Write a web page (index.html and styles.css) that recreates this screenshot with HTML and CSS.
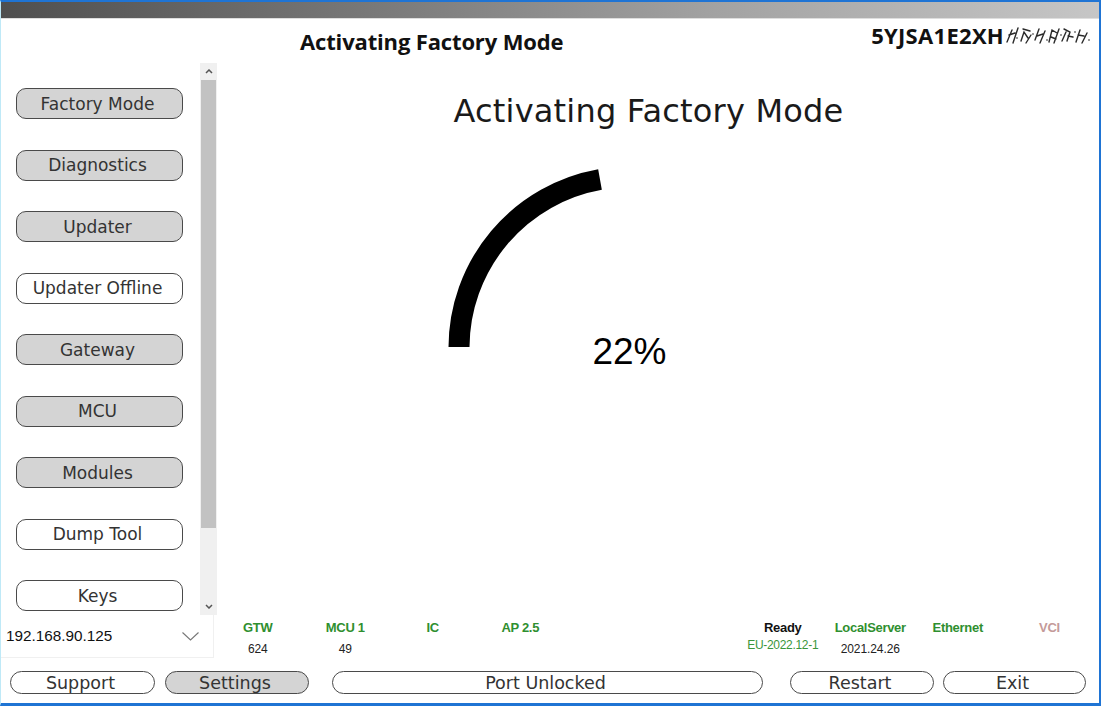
FILE: index.html
```html
<!DOCTYPE html>
<html lang="en">
<head>
<meta charset="utf-8">
<title>Activating Factory Mode</title>
<link rel="stylesheet" href="styles.css">
</head>
<body>
<div class="window">
  <div class="titlebar"></div>
  <header class="header">
    <div class="title">Activating Factory Mode</div>
    <div class="vin">5YJSA1E2XH<svg class="scribble" width="86" height="22" viewBox="0 0 86 22" aria-hidden="true">
      <g fill="none" stroke="#2a2a2a" stroke-width="1.4" stroke-linecap="round">
        <path d="M3 18 L8 6 M5 11 L11 9 M9 19 L14 4"/>
        <path d="M17 17 L20 8 L24 14 M19 5 L26 7 M22 19 L27 11"/>
        <path d="M31 16 L35 5 M33 12 L39 10 M36 19 L41 7"/>
        <path d="M45 18 L48 6 L53 9 M47 13 L52 15 M50 19 L55 5"/>
        <path d="M58 17 L62 8 M60 5 L66 8 L63 17 M64 12 L69 13"/>
        <path d="M72 18 L76 6 M74 11 L80 12 M78 19 L83 9"/>
      </g>
      <g fill="#9a9a9a">
        <rect x="12" y="13" width="2" height="2"/><rect x="28" y="9" width="2" height="2"/>
        <rect x="42" y="15" width="2" height="2"/><rect x="56" y="10" width="2" height="2"/>
        <rect x="70" y="7" width="2" height="2"/><rect x="84" y="15" width="2" height="2"/>
      </g>
    </svg></div>
  </header>

  <div class="middle">
    <nav class="sidebar">
      <div class="btnlist">
        <button class="side-btn filled">Factory Mode</button>
        <button class="side-btn filled">Diagnostics</button>
        <button class="side-btn filled">Updater</button>
        <button class="side-btn">Updater Offline</button>
        <button class="side-btn filled">Gateway</button>
        <button class="side-btn filled">MCU</button>
        <button class="side-btn filled">Modules</button>
        <button class="side-btn">Dump Tool</button>
        <button class="side-btn">Keys</button>
      </div>
      <div class="scrollbar">
        <div class="arrow"><svg width="8" height="5" viewBox="0 0 8 5"><path d="M1 4 L4 1 L7 4" fill="none" stroke="#555" stroke-width="1.5"/></svg></div>
        <div class="thumb"></div>
        <div class="track"></div>
        <div class="arrow"><svg width="8" height="5" viewBox="0 0 8 5"><path d="M1 1 L4 4 L7 1" fill="none" stroke="#555" stroke-width="1.5"/></svg></div>
      </div>
    </nav>

    <main class="content">
      <h1 class="heading">Activating Factory Mode</h1>
      <div class="progress">
        <svg width="380" height="220" viewBox="0 0 380 220">
          <path d="M19 190 A171 171 0 0 1 160 22.5" fill="none" stroke="#000" stroke-width="21"/>
          <text x="189.5" y="207" text-anchor="middle" class="pct">22%</text>
        </svg>
      </div>
    </main>
  </div>

  <div class="lower">
    <div class="dropdown">
      <span class="ip">192.168.90.125</span>
      <svg width="17" height="9" viewBox="0 0 17 9"><path d="M0.5 0.5 L8.5 8 L16.5 0.5" fill="none" stroke="#777" stroke-width="1.1"/></svg>
    </div>
    <div class="status">
      <div class="stat"><div class="lbl green">GTW</div><div class="val">624</div></div>
      <div class="stat"><div class="lbl green">MCU 1</div><div class="val">49</div></div>
      <div class="stat"><div class="lbl green">IC</div></div>
      <div class="stat"><div class="lbl green">AP 2.5</div></div>
      <div class="stat"></div>
      <div class="stat"></div>
      <div class="stat"><div class="lbl">Ready</div><div class="val green up">EU-2022.12-1</div></div>
      <div class="stat"><div class="lbl green">LocalServer</div><div class="val">2021.24.26</div></div>
      <div class="stat"><div class="lbl green">Ethernet</div></div>
      <div class="stat"><div class="lbl pink">VCI</div></div>
    </div>
  </div>

  <div class="actions">
    <button class="pill w-support">Support</button>
    <button class="pill filled w-settings">Settings</button>
    <button class="pill w-port">Port Unlocked</button>
    <button class="pill w-restart">Restart</button>
    <button class="pill w-exit">Exit</button>
  </div>
</div>
</body>
</html>
```

FILE: styles.css
```css
* { box-sizing: border-box; }

html, body {
  margin: 0;
  padding: 0;
  background: #ffffff;
}

.window {
  width: 1101px;
  height: 706px;
  display: flex;
  flex-direction: column;
  background: #ffffff;
  border-top: 2px solid #1f74d4;
  border-right: 2px solid #1f74d4;
  border-bottom: 3px solid #1f74d4;
  border-left: 1px solid #bfe9f7;
  overflow: hidden;
}

.titlebar {
  height: 17px;
  flex: none;
  background: linear-gradient(to right, #4f4f4f 0%, #7a7a7a 35%, #a2a2a2 65%, #c6c6c6 100%);
  border-bottom: 1px solid #dedede;
}

.header {
  height: 44px;
  flex: none;
  display: flex;
  justify-content: space-between;
  align-items: flex-start;
  padding-left: 299px;
  padding-right: 9px;
}

.title {
  padding-top: 9px;
  font-family: "Open Sans", "Liberation Sans", sans-serif;
  font-weight: 700;
  font-size: 22px;
  line-height: 26px;
  color: #111;
  letter-spacing: -0.15px;
}

.vin {
  padding-top: 3px;
  display: flex;
  align-items: center;
  font-family: "Open Sans", "Liberation Sans", sans-serif;
  font-weight: 700;
  font-size: 22px;
  line-height: 26px;
  color: #111;
  letter-spacing: 0.3px;
}

.scribble { margin-left: 0; }

.middle {
  height: 552px;
  flex: none;
  display: flex;
}

.sidebar {
  width: 216px;
  flex: none;
  display: flex;
}

.btnlist {
  width: 199px;
  padding-top: 25px;
  padding-left: 15px;
  display: flex;
  flex-direction: column;
  gap: 30.5px;
}

.side-btn {
  width: 167px;
  height: 31px;
  flex: none;
  border: 1.5px solid #4a4a4a;
  border-radius: 10px;
  background: #ffffff;
  color: #333;
  font-family: "DejaVu Sans", sans-serif;
  font-size: 17px;
  padding: 0 4px 0 0;
}

.side-btn.filled { background: #d4d4d4; }

.scrollbar {
  width: 17px;
  flex: none;
  display: flex;
  flex-direction: column;
  background: #f0f0f0;
}

.arrow {
  height: 17px;
  flex: none;
  display: flex;
  align-items: center;
  justify-content: center;
}

.thumb {
  height: 448px;
  flex: none;
  margin: 0 1px;
  background: #c2c2c2;
}

.track { flex: 1; }

.content {
  flex: 1;
  display: flex;
  flex-direction: column;
}

.heading {
  margin: 28px 0 0 0;
  padding-right: 19px;
  text-align: center;
  font-family: "DejaVu Sans", sans-serif;
  font-weight: 400;
  font-size: 32px;
  line-height: 40px;
  color: #1a1a1a;
  letter-spacing: 0.2px;
}

.progress {
  margin-top: 26px;
  margin-left: 223px;
}

.progress svg { display: block; }

.pct {
  font-family: "Liberation Sans", Arial, sans-serif;
  font-size: 37px;
  fill: #000;
}

.lower {
  height: 45px;
  flex: none;
  display: flex;
}

.dropdown {
  width: 213px;
  flex: none;
  height: 43px;
  display: flex;
  align-items: center;
  justify-content: space-between;
  padding: 0 14px 0 5px;
  border-right: 1px solid #f0f0f0;
  border-bottom: 1px solid #f0f0f0;
}

.ip {
  font-family: "Liberation Sans", Arial, sans-serif;
  font-size: 15.3px;
  color: #111;
}

.status {
  display: grid;
  grid-template-columns: repeat(9, 87.5px) 96px;
}

.stat {
  display: flex;
  flex-direction: column;
  align-items: center;
  padding-top: 6px;
}

.lbl {
  font-family: "Liberation Sans", Arial, sans-serif;
  font-weight: 700;
  font-size: 13px;
  line-height: 14px;
  letter-spacing: -0.3px;
  color: #111;
}

.val {
  margin-top: 7px;
  font-family: "Liberation Sans", Arial, sans-serif;
  font-size: 12px;
  line-height: 14px;
  letter-spacing: -0.1px;
  color: #222;
}

.val.up { margin-top: 3px; letter-spacing: -0.3px; }

.green { color: #2f8f2f; }
.val.green { color: #3a963a; }
.pink { color: #c49a9a; }

.actions {
  flex: 1;
  display: flex;
  align-items: flex-start;
  padding-top: 11px;
  padding-left: 9px;
}

.pill {
  height: 23px;
  flex: none;
  border: 1.5px solid #4a4a4a;
  border-radius: 12px;
  background: #ffffff;
  color: #333;
  font-family: "DejaVu Sans", sans-serif;
  font-size: 17.5px;
  line-height: 18px;
  padding: 0 4px 0 0;
}

.pill.filled { background: #d4d4d4; }

.w-support { width: 145px; }
.w-settings { width: 144px; margin-left: 10px; }
.w-port { width: 431px; margin-left: 23px; }
.w-restart { width: 144px; margin-left: 27px; }
.w-exit { width: 143px; margin-left: 9px; }
```
